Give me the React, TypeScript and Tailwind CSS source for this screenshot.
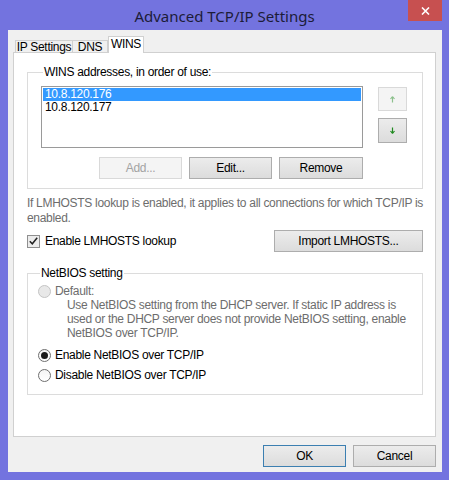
import type { ReactNode } from 'react'

const font = { fontFamily: '"Liberation Sans", Arial, sans-serif' }

interface BtnProps {
  children?: ReactNode
  disabled?: boolean
  isDefault?: boolean
  className?: string
}

const Btn = ({ children, disabled, isDefault, className = '' }: BtnProps) => {
  const look = disabled
    ? 'border-[#d9d9d9] bg-[#f4f4f4] text-[#a3a3a3]'
    : isDefault
      ? 'border-[#3c7fb1] bg-gradient-to-b from-[#ececec] to-[#dcdcdc] text-black'
      : 'border-[#adadad] bg-gradient-to-b from-[#ececec] to-[#dcdcdc] text-black'
  return (
    <button className={`flex items-center justify-center border text-[12px] leading-none tracking-[-0.3px] ${look} ${className}`}>
      {children}
    </button>
  )
}

const Radio = ({ checked, disabled }: { checked?: boolean; disabled?: boolean }) => (
  <span
    className={`flex h-[13px] w-[13px] shrink-0 items-center justify-center rounded-full border ${
      disabled ? 'border-[#c4c4c4] bg-[#e8e8e8]' : 'border-[#6f6f6f] bg-gradient-to-b from-[#f4f4f4] to-white'
    }`}
  >
    {checked && <span className="h-[7px] w-[7px] rounded-full bg-[#1a1a1a]" />}
  </span>
)

const Arrow = ({ down, dim }: { down?: boolean; dim?: boolean }) => (
  <svg width="5" height="7" viewBox="0 0 5 7" className={down ? 'rotate-180' : ''}>
    <path d="M2.5 0.5 L0.5 3 M2.5 0.5 L4.5 3 M2.5 0.5 V6.5" stroke={dim ? '#8cc08c' : '#1f8a1f'} strokeWidth="1.2" fill="none" />
  </svg>
)

export default function App() {
  return (
    <div className="flex h-[480px] w-[449px] flex-col bg-[#7373df]" style={font}>
      {/* title bar */}
      <div className="relative flex h-[30px] shrink-0 items-center justify-center">
        <span className="pt-[2px] text-[15px] text-[#1c1c38]" style={{ fontFamily: '"Noto Sans", "Open Sans", sans-serif' }}>
          Advanced TCP/IP Settings
        </span>
        <div className="absolute right-[7px] top-0 flex h-[21px] w-[34px] items-center justify-center bg-[#c75050]">
          <svg width="9" height="8" viewBox="0 0 9 8">
            <path d="M1 0.5 L8 7.5 M8 0.5 L1 7.5" stroke="white" strokeWidth="1.6" />
          </svg>
        </div>
      </div>

      {/* client */}
      <div className="ml-[8px] mr-[7px] flex h-[442px] flex-col bg-[#f0f0f0] pt-[6px] pl-[5px] text-[12px] tracking-[-0.3px]">
        {/* tabs */}
        <div className="relative z-10 flex h-[16px] items-end whitespace-nowrap pl-[2px]">
          <div className="flex h-[12px] w-[58px] items-center justify-center border border-b-0 border-[#d0d0d0] bg-[#f0f0f0] leading-none">
            IP Settings
          </div>
          <div className="flex h-[12px] w-[35px] items-center justify-center border border-b-0 border-l-0 border-[#d0d0d0] bg-[#f0f0f0] leading-none">
            DNS
          </div>
          <div className="-mb-px flex h-[17px] w-[36px] items-center justify-center border border-b-0 border-[#d0d0d0] bg-white pb-[2px] leading-none">
            WINS
          </div>
        </div>

        {/* panel */}
        <div className="h-[385px] w-[423px] border border-[#d0d0d0] bg-white pl-[13px] text-black">
          <fieldset className="mt-[12px] w-[396px] border border-[#dcdcdc] pb-[9px] pl-[13px]">
            <legend className="ml-[2px] px-[1px] leading-[14px]">WINS addresses, in order of use:</legend>
            <div className="mt-[7px] flex">
              <div className="h-[62px] w-[322px] border border-[#9a9a9a] leading-[13px]">
                <div className="mx-px mt-px bg-[#3399ff] pl-[2px] text-white">10.8.120.176</div>
                <div className="pl-[3px]">10.8.120.177</div>
              </div>
              <div className="ml-[15px] flex flex-col gap-[7px] pt-px">
                <Btn disabled className="h-[24px] w-[29px]">
                  <Arrow dim />
                </Btn>
                <Btn className="h-[25px] w-[29px]">
                  <Arrow down />
                </Btn>
              </div>
            </div>
            <div className="mt-[9px] flex w-[322px] justify-end gap-[7px]">
              <Btn disabled className="h-[22px] w-[83px]">Add...</Btn>
              <Btn className="h-[22px] w-[83px]">Edit...</Btn>
              <Btn className="h-[22px] w-[84px]">Remove</Btn>
            </div>
          </fieldset>

          <p className="mt-[7px] w-[398px] leading-[15px] text-[#6d6d6d]">
            If LMHOSTS lookup is enabled, it applies to all connections for which TCP/IP is enabled.
          </p>

          <div className="mt-[4px] flex w-[396px] items-center justify-between">
            <div className="flex items-center gap-[5px]">
              <span className="flex h-[13px] w-[13px] items-center justify-center border border-[#8f8f8f] bg-[#ececec]">
                <svg width="9" height="8" viewBox="0 0 9 8">
                  <path d="M0.8 4.2 L3.3 6.8 L8.2 0.8" stroke="#222" strokeWidth="1.5" fill="none" />
                </svg>
              </span>
              <span>Enable LMHOSTS lookup</span>
            </div>
            <Btn className="h-[22px] w-[149px]">Import LMHOSTS...</Btn>
          </div>

          <fieldset className="mt-[14px] w-[396px] border border-[#dcdcdc] pb-[12px] pl-[10px]">
            <legend className="ml-[2px] px-[1px] leading-[14px]">NetBIOS setting</legend>
            <div className="mt-[4px] flex h-[14px] items-center gap-[4px] text-[#6d6d6d]">
              <Radio disabled />
              <span>Default:</span>
            </div>
            <p className="ml-[29px] w-[350px] leading-[14px] text-[#6d6d6d]">
              Use NetBIOS setting from the DHCP server. If static IP address is used or the DHCP server does not
              provide NetBIOS setting, enable NetBIOS over TCP/IP.
            </p>
            <div className="mt-[8px] flex h-[14px] items-center gap-[4px]">
              <Radio checked />
              <span>Enable NetBIOS over TCP/IP</span>
            </div>
            <div className="mt-[6px] flex h-[14px] items-center gap-[4px]">
              <Radio />
              <span>Disable NetBIOS over TCP/IP</span>
            </div>
          </fieldset>
        </div>

        {/* dialog buttons */}
        <div className="mt-[8px] flex w-[423px] justify-end gap-[7px]">
          <Btn isDefault className="h-[22px] w-[83px]">OK</Btn>
          <Btn className="h-[22px] w-[83px]">Cancel</Btn>
        </div>
      </div>
    </div>
  )
}
